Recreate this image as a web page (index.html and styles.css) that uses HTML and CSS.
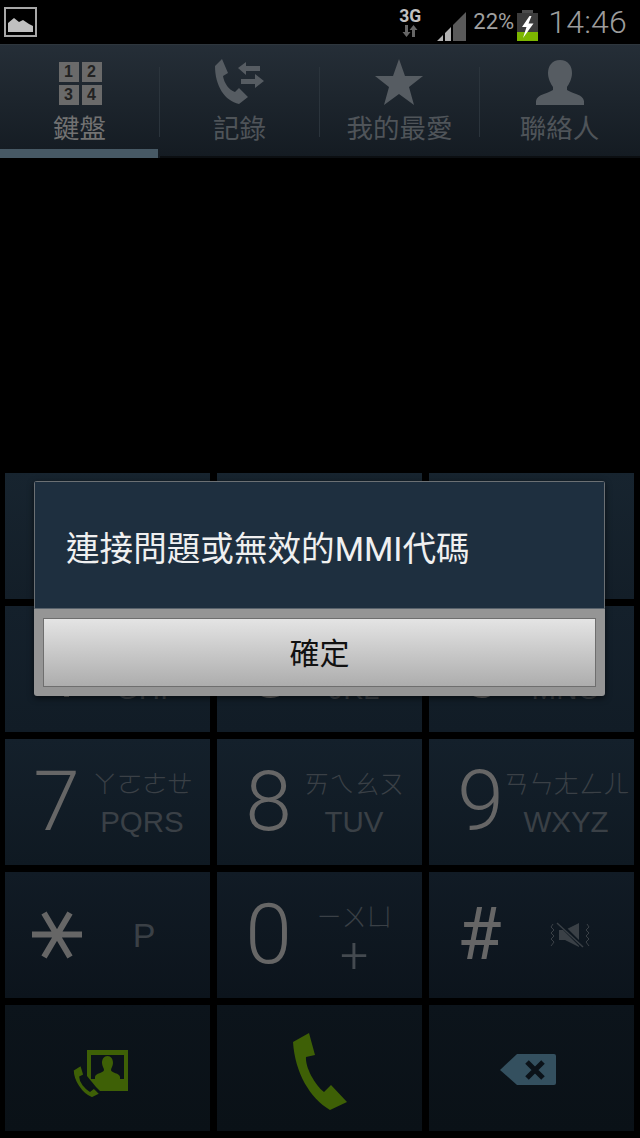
FILE: index.html
```html
<!DOCTYPE html>
<html lang="zh-Hant">
<head>
<meta charset="utf-8">
<title>鍵盤</title>
<link rel="stylesheet" href="styles.css">
</head>
<body>
<div class="screen">
  <header class="status">
    <svg class="pic-icon" viewBox="0 0 33 30"><rect x="1" y="1" width="31" height="28" fill="#000" stroke="#a8a8a8" stroke-width="2"/><path d="M4 25V16L10 11 15 15 19 13 25 17 29 19V25Z" fill="#c0c0c0"/></svg>
    <div class="status-right">
      <div class="net"><span class="net-label">3G</span>
        <svg class="net-arrows" viewBox="0 0 18 12"><path d="M4 0H7V7H9.500L5.500 12 1.500 7H4ZM11 12H14V5H16.500L12.500 0 8.500 5H11Z" fill="#666"/></svg>
      </div>
      <svg class="signal" viewBox="0 0 30 29"><path d="M16 13 29 0V29H16Z" fill="#5a5a5a"/><path d="M0 29 6 23V29ZM8 21 14 15V29H8Z" fill="#b0b0b0"/></svg>
      <span class="pct">22%</span>
      <svg class="battery" viewBox="0 0 21 31"><rect x="5" y="0" width="11" height="3" fill="#4c4c4c"/><rect x="0" y="3" width="21" height="28" fill="#3c3c3c"/><rect x="0" y="22" width="21" height="9" fill="#7cb600"/><path d="M12.500 6 5 17H9.500L6 28 16.500 13.500H11.500L14.500 6Z" fill="#fff"/></svg>
      <span class="clock">14:46</span>
    </div>
  </header>

  <nav class="tabs">
    <div class="tab tab-active">
      <div class="tab-icon">
        <div class="pad-icon"><span>1</span><span>2</span><span>3</span><span>4</span></div>
      </div>
      <div class="tab-label">鍵盤</div>
      <div class="tab-mark"></div>
    </div>
    <div class="tab">
      <div class="tab-icon">
        <svg class="ico-log" viewBox="0 0 50 46"><path d="M7 0 13 14 8 17C9 24 14 31 20 33L24 29 33 38 24 45C10 42 0 27 0 7Z" fill="#565c62"/><path d="M23 9 31 3V7H45V12H31V16ZM49 22 40 29V25H26V20H40V15Z" fill="#565c62"/></svg>
      </div>
      <div class="tab-label">記錄</div>
      <div class="tab-mark"></div>
    </div>
    <div class="tab">
      <div class="tab-icon">
        <svg class="ico-star" viewBox="0 0 48 46"><path d="M24 0 30 17H48L34 28 39 46 24 35 9 46 14 28 0 17H18Z" fill="#565c62"/></svg>
      </div>
      <div class="tab-label">我的最愛</div>
      <div class="tab-mark"></div>
    </div>
    <div class="tab tab-last">
      <div class="tab-icon">
        <svg class="ico-person" viewBox="0 0 48 45"><path d="M24 0C32 0 36 6 36 13 36 19 33 24 31 27V30C37 34 47 34 48 41V45H0V41C1 34 11 34 17 30V27C15 24 12 19 12 13 12 6 16 0 24 0Z" fill="#565c62"/></svg>
      </div>
      <div class="tab-label">聯絡人</div>
      <div class="tab-mark"></div>
    </div>
  </nav>

  <div class="spacer"></div>

  <main class="keypad">
    <div class="key row-1"></div>
    <div class="key row-1"></div>
    <div class="key row-1"></div>

    <div class="key row-2"><span class="digit">4</span><span class="side"><span class="zh">ㄐㄑㄒ</span><span class="en">GHI</span></span></div>
    <div class="key row-2"><span class="digit">5</span><span class="side"><span class="zh">ㄓㄔㄕㄖ</span><span class="en">JKL</span></span></div>
    <div class="key row-2"><span class="digit">6</span><span class="side"><span class="zh">ㄗㄘㄙ</span><span class="en">MNO</span></span></div>

    <div class="key row-3"><span class="digit">7</span><span class="side"><span class="zh">ㄚㄛㄜㄝ</span><span class="en">PQRS</span></span></div>
    <div class="key row-3"><span class="digit">8</span><span class="side"><span class="zh">ㄞㄟㄠㄡ</span><span class="en">TUV</span></span></div>
    <div class="key row-3"><span class="digit">9</span><span class="side"><span class="zh">ㄢㄣㄤㄥㄦ</span><span class="en">WXYZ</span></span></div>

    <div class="key row-4">
      <span class="digit"><svg class="ico-asterisk" viewBox="0 0 50 50"><path d="M0 24.500H50M12 3 38 47M38 3 12 47" stroke="#666" stroke-width="6" fill="none"/></svg></span>
      <span class="side"><span class="en en-p">P</span></span>
    </div>
    <div class="key row-4"><span class="digit">0</span><span class="side"><span class="zh">ㄧㄨㄩ</span><span class="en en-plus">+</span></span></div>
    <div class="key row-4">
      <span class="digit digit-hash">#</span>
      <span class="side"><svg class="ico-mute" viewBox="0 0 40 26"><path d="M3 2 1 5 4 8 1 11 4 14 1 17 4 20 1 24M37 2 39 5 36 8 39 11 36 14 39 17 36 20 39 24" stroke="#3a4046" stroke-width="1" fill="none"/><path d="M9 8H15L29 1V25L15 18H9Z" fill="#3a4046"/><path d="M7 -1 32 24" stroke="#0e1720" stroke-width="4"/><path d="M7 1 33 25" stroke="#3a4046" stroke-width="1.500"/></svg></span>
    </div>

    <div class="key key-action row-5">
      <svg class="ico-contact" viewBox="0 0 55 48"><path d="M14 0H55V41H27L23 37 14 26Z" fill="#3e6006"/><rect x="18" y="5" width="33" height="24" fill="#0b1219"/><path d="M34.500 6C38 6 40 9 40 13 40 16 38 18 38 20 38 23 47 23 47 27V29H22V27C22 23 31 23 31 20 31 18 29 16 29 13 29 9 31 6 34.500 6Z" fill="#3e6006"/><path d="M8 15 11 25 7 27C7 32 12 38 17 41L21 38 27 44 19 48C8 44 0 30 0 20Z" fill="#3e6006" stroke="#0b1219" stroke-width="1.500"/></svg>
    </div>
    <div class="key key-action row-5">
      <svg class="ico-call" viewBox="0 0 54 77"><path d="M16 0 22 22 13 24C12 34 22 52 31 59L38 52 54 69 37 77C17 65 2 40 0 9Z" fill="#3e6006"/></svg>
    </div>
    <div class="key key-action row-5">
      <svg class="ico-back" viewBox="0 0 56 31"><path d="M17 0H54Q56 0 56 2V29Q56 31 54 31H17L0 16Z" fill="#34505f"/><path d="M27 8 43 24M43 8 27 24" stroke="#0b1219" stroke-width="5"/></svg>
    </div>
  </main>

  <div class="dialog">
    <div class="dialog-body">連接問題或無效的MMI代碼</div>
    <div class="dialog-foot"><div class="dialog-btn">確定</div></div>
  </div>
</div>
</body>
</html>
```

FILE: styles.css
```css
* { box-sizing: border-box; }

html, body {
  margin: 0;
  padding: 0;
  background: #000;
}

.screen {
  position: relative;
  width: 640px;
  height: 1138px;
  display: flex;
  flex-direction: column;
  overflow: hidden;
  background: #000;
  font-family: "Roboto", "Noto Sans CJK TC", sans-serif;
}

.status {
  height: 44px;
  flex: none;
  display: flex;
  align-items: center;
  justify-content: space-between;
  padding: 0 13px 0 4px;
}

.pic-icon { width: 33px; height: 30px; }

.status-right {
  display: flex;
  align-items: center;
}

.net {
  display: flex;
  flex-direction: column;
  align-items: center;
  width: 24px;
  margin-right: 15px;
}

.net-label {
  font: 700 17.5px/18px "Roboto", sans-serif;
  color: #c0c0c0;
}

.net-arrows { width: 18px; height: 12px; }

.signal { width: 30px; height: 29px; margin-top: 8px; margin-right: 6px; }

.pct {
  font: 400 22px/26px "Roboto", sans-serif;
  color: #a0a0a0;
  margin-right: 4px;
  width: 40px;
}

.battery { width: 21px; height: 31px; margin-top: 6px; margin-right: 10px; }

.clock {
  font: 300 32px/40px "Roboto", sans-serif;
  color: #9c9c9c;
  letter-spacing: 0.2px;
}

.tabs {
  height: 114px;
  flex: none;
  display: flex;
  background: linear-gradient(#252e37, #141b22);
  border-top: 1px solid #2e363d;
}

.tab {
  position: relative;
  width: 160px;
  display: flex;
  flex-direction: column;
  align-items: center;
  color: #4f5459;
}

.tab::after {
  content: "";
  position: absolute;
  right: 0;
  top: 22px;
  width: 1px;
  height: 70px;
  background: #2b343c;
}

.tab-last::after { display: none; }

.tab-icon {
  height: 60px;
  width: 100%;
  display: flex;
  align-items: flex-end;
  justify-content: center;
  flex: none;
}

.tab-label {
  font: 400 26.5px/36px "Noto Sans CJK TC", sans-serif;
  flex: none;
  height: 36px;
  margin: 4px 1px 0 0;
}

.tab-active { color: #727272; }

.tab-mark {
  margin-top: auto;
  width: 100%;
  height: 2px;
  background: #0b0e11;
}

.tab-active .tab-mark {
  width: 158px;
  height: 9px;
  background: #475965;
  align-self: flex-start;
}

.pad-icon {
  width: 43px;
  display: grid;
  grid-template-columns: 20px 20px;
  grid-auto-rows: 20px;
  gap: 3px;
}

.pad-icon span {
  background: #6a6a6a;
  color: #222;
  font: 700 16px/20px "Liberation Sans", sans-serif;
  text-align: center;
}

.ico-log { width: 50px; height: 46px; }
.ico-star { width: 48px; height: 46px; margin-right: 2px; }
.ico-person { width: 48px; height: 45px; }

.spacer { flex: 1; }

.keypad {
  flex: none;
  display: grid;
  grid-template-columns: repeat(3, 205px);
  grid-auto-rows: 126px;
  gap: 7px;
  padding: 0 0 7px 5px;
}

.key {
  display: grid;
  grid-template-columns: 71px 100px;
  padding-left: 16px;
  align-items: center;
}

.row-1 { background: linear-gradient(#17242f, #131e28); }
.row-2 { background: linear-gradient(#14202b, #111c26); }
.row-3 { background: linear-gradient(#14202b, #0f1922); }
.row-4 { background: linear-gradient(#111b25, #0c141c); }
.row-5 { background: linear-gradient(#0c141b, #0a1117); }

.digit {
  font: 300 84px/100px "Roboto", sans-serif;
  color: #666;
  text-align: center;
  display: flex;
  align-items: center;
  justify-content: center;
}

.digit-hash {
  font-size: 72px;
  font-weight: 400;
  margin-left: -2px;
}

.ico-asterisk { width: 50px; height: 50px; }

.side {
  display: flex;
  flex-direction: column;
  align-items: center;
  color: #3a4046;
}

.zh {
  font: 300 25.5px/30px "Noto Sans CJK TC", sans-serif;
  white-space: nowrap;
  letter-spacing: -0.5px;
  margin-top: 2px;
}

.en {
  font: 400 29.5px/36px "Liberation Sans", sans-serif;
  margin-top: 7px;
}

.en-p {
  margin: 0 0 0 4px;
  font-size: 34px;
}

.en-plus {
  font: 300 50px/36px "Roboto", sans-serif;
  margin-top: 7px;
  color: #444a50;
}

.ico-mute {
  width: 40px;
  height: 26px;
  margin-left: 8px;
  overflow: visible;
}

.key-action {
  display: flex;
  align-items: center;
  justify-content: center;
  padding-left: 0;
}

.ico-contact { width: 55px; height: 48px; margin: 12px 14px 0 0; }
.ico-call { width: 54px; height: 77px; margin-top: 7px; }
.ico-back { width: 56px; height: 31px; margin: 3px 7px 0 0; }

.dialog {
  position: absolute;
  left: 34px;
  top: 481px;
  width: 571px;
  height: 215px;
  display: flex;
  flex-direction: column;
  border-radius: 3px;
  overflow: hidden;
  box-shadow: 0 2px 6px rgba(0, 0, 0, 0.6);
}

.dialog-body {
  height: 128px;
  flex: none;
  padding: 48px 0 0 31px;
  background: #1e2f3f;
  border: 1px solid #6b7074;
  border-bottom: 1px solid #59636c;
  color: #f0f0f0;
  font: 400 33.6px/40px "Roboto", "Noto Sans CJK TC", sans-serif;
  white-space: nowrap;
}

.dialog-foot {
  flex: 1;
  background: #959595;
  padding: 9px;
}

.dialog-btn {
  height: 69px;
  border: 1px solid #6e6e6e;
  background: linear-gradient(#e4e4e4, #adadad);
  color: #111;
  font: 400 30px/65px "Noto Sans CJK TC", sans-serif;
  text-align: center;
}
```
